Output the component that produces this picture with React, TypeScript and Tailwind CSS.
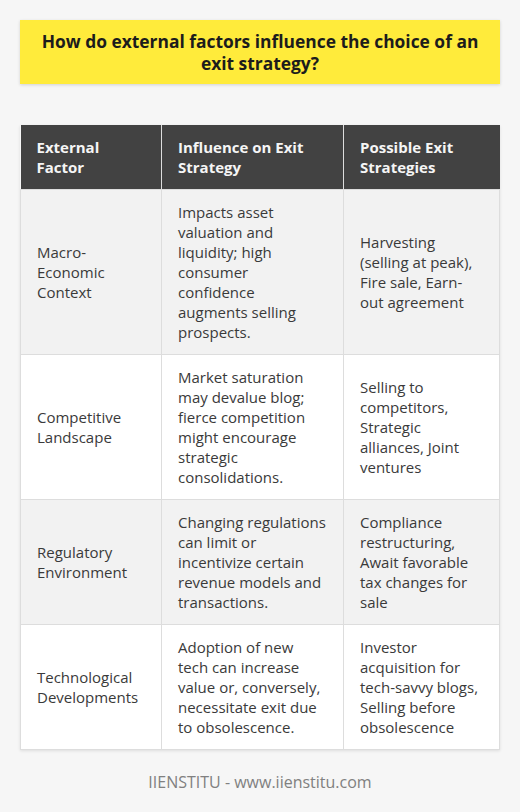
const rows = [
  {
    factor: "Macro-Economic Context",
    influence:
      "Impacts asset valuation and liquidity; high consumer confidence augments selling prospects.",
    exits: "Harvesting (selling at peak), Fire sale, Earn-out agreement",
  },
  {
    factor: "Competitive Landscape",
    influence:
      "Market saturation may devalue blog; fierce competition might encourage strategic consolidations.",
    exits: "Selling to competitors, Strategic alliances, Joint ventures",
  },
  {
    factor: "Regulatory Environment",
    influence:
      "Changing regulations can limit or incentivize certain revenue models and transactions.",
    exits: "Compliance restructuring, Await favorable tax changes for sale",
  },
  {
    factor: "Technological Developments",
    influence:
      "Adoption of new tech can increase value or, conversely, necessitate exit due to obsolescence.",
    exits: "Investor acquisition for tech-savvy blogs, Selling before obsolescence",
  },
];

export default function App() {
  return (
    <div
      className="w-[520px] h-[812px] bg-[#f6f6f6] px-5 pt-5"
      style={{ fontFamily: '"Open Sans", "Noto Sans", sans-serif' }}
    >
      {/* Title */}
      <div className="bg-[#ffeb3b] h-[64px] flex items-center justify-center px-4 shadow-[0_1px_3px_rgba(0,0,0,0.15)]">
        <h1 className="text-center text-[17.4px] leading-[22px] font-bold text-[#1c1c1c]">
          How do external factors influence the choice of an exit strategy?
        </h1>
      </div>

      {/* Table */}
      <table className="mt-[41px] w-[479px] border-collapse table-fixed text-[15px] leading-[20px] shadow-[0_1px_3px_rgba(0,0,0,0.1)]">
        <colgroup>
          <col className="w-[141px]" />
          <col className="w-[182px]" />
          <col className="w-[156px]" />
        </colgroup>
        <thead>
          <tr className="bg-[#424242] text-[#f5f5f5] h-[64px]">
            <th className="text-left font-bold px-4 py-3 border-r border-[#dddddd] align-middle">
              External Factor
            </th>
            <th className="text-left font-bold px-4 py-3 border-r border-[#dddddd] align-middle">
              Influence on Exit Strategy
            </th>
            <th className="text-left font-bold px-4 py-3 align-middle">
              Possible Exit Strategies
            </th>
          </tr>
        </thead>
        <tbody className="text-[#3a3a3a]">
          {rows.map((r, i) => (
            <tr key={r.factor} className={i % 2 === 0 ? "bg-[#f2f2f2]" : "bg-white"}>
              <td className="px-4 py-3 border border-[#dddddd] align-middle">{r.factor}</td>
              <td className="px-4 py-3 border border-[#dddddd] align-middle">{r.influence}</td>
              <td className="px-4 py-3 border border-[#dddddd] align-middle">{r.exits}</td>
            </tr>
          ))}
        </tbody>
      </table>

      <p className="mt-5 text-center text-[16px] leading-6 text-[#808080]">IIENSTITU - www.iienstitu.com</p>
    </div>
  );
}
